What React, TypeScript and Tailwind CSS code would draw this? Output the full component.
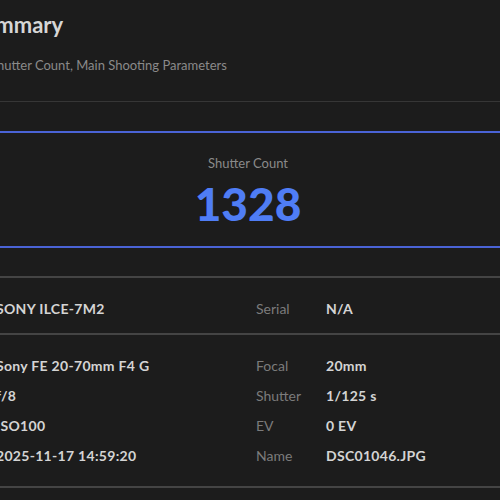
import React from "react";

const FONT = { fontFamily: "Lato, 'Open Sans', sans-serif" };

const top = [
  { label: "Model", value: "SONY ILCE-7M2" },
  { label: "Serial", value: "N/A" },
];

const rows: [string, string, string, string][] = [
  ["Lens", "Sony FE 20-70mm F4 G", "Focal", "20mm"],
  ["Aperture", "f/8", "Shutter", "1/125 s"],
  ["ISO", "ISO100", "EV", "0 EV"],
  ["Date", "2025-11-17 14:59:20", "Name", "DSC01046.JPG"],
];

function Pair({ label, value }: { label: string; value: string }) {
  return (
    <div className="flex items-center h-[20px]">
      <span className="w-[70px] text-[14px] text-[#7b7b7b]">{label}</span>
      <span className="text-[14px] font-bold text-[#d4d4d4] tracking-[0.3px]">{value}</span>
    </div>
  );
}

export default function App() {
  return (
    <div className="w-[500px] h-[500px] overflow-hidden bg-[#1c1c1c]" style={FONT}>
      <div className="ml-[-98px] w-[692px]">
        {/* Header */}
        <div className="h-[102px] border-b border-[#363636] px-[74px] pt-[11px]">
          <h1 className="ml-[-5px] text-[22px] leading-[28px] font-bold text-[#d6d6d6]">Summary</h1>
          <p className="mt-[17px] ml-[14px] text-[13px] leading-[18px] text-[#8a8a8a]">
            Shutter Count, Main Shooting Parameters
          </p>
        </div>

        {/* Shutter count */}
        <div className="mt-[29px] border-y-2 border-[#4a63d6] text-center pt-[21px] pb-[18px]">
          <div className="text-[13px] leading-[18px] text-[#8a8a8a]">Shutter Count</div>
          <div className="mt-[7px] text-[46px] leading-[49px] font-black text-[#4f7df5]">1328</div>
        </div>

        {/* Camera */}
        <div className="mt-[28px] border-t-2 border-[#444444] px-[24px] pt-[20px] pb-[15px]">
          <div className="grid grid-cols-2 gap-x-[16px]">
            {top.map((p) => (
              <Pair key={p.label} label={p.label} value={p.value} />
            ))}
          </div>
        </div>

        {/* Parameters */}
        <div className="border-y-2 border-[#444444] px-[24px] pt-[20px] pb-[21px]">
          <div className="grid grid-cols-2 gap-x-[16px] gap-y-[10px]">
            {rows.map(([l1, v1, l2, v2]) => (
              <React.Fragment key={l1}>
                <Pair label={l1} value={v1} />
                <Pair label={l2} value={v2} />
              </React.Fragment>
            ))}
          </div>
        </div>
      </div>
    </div>
  );
}
